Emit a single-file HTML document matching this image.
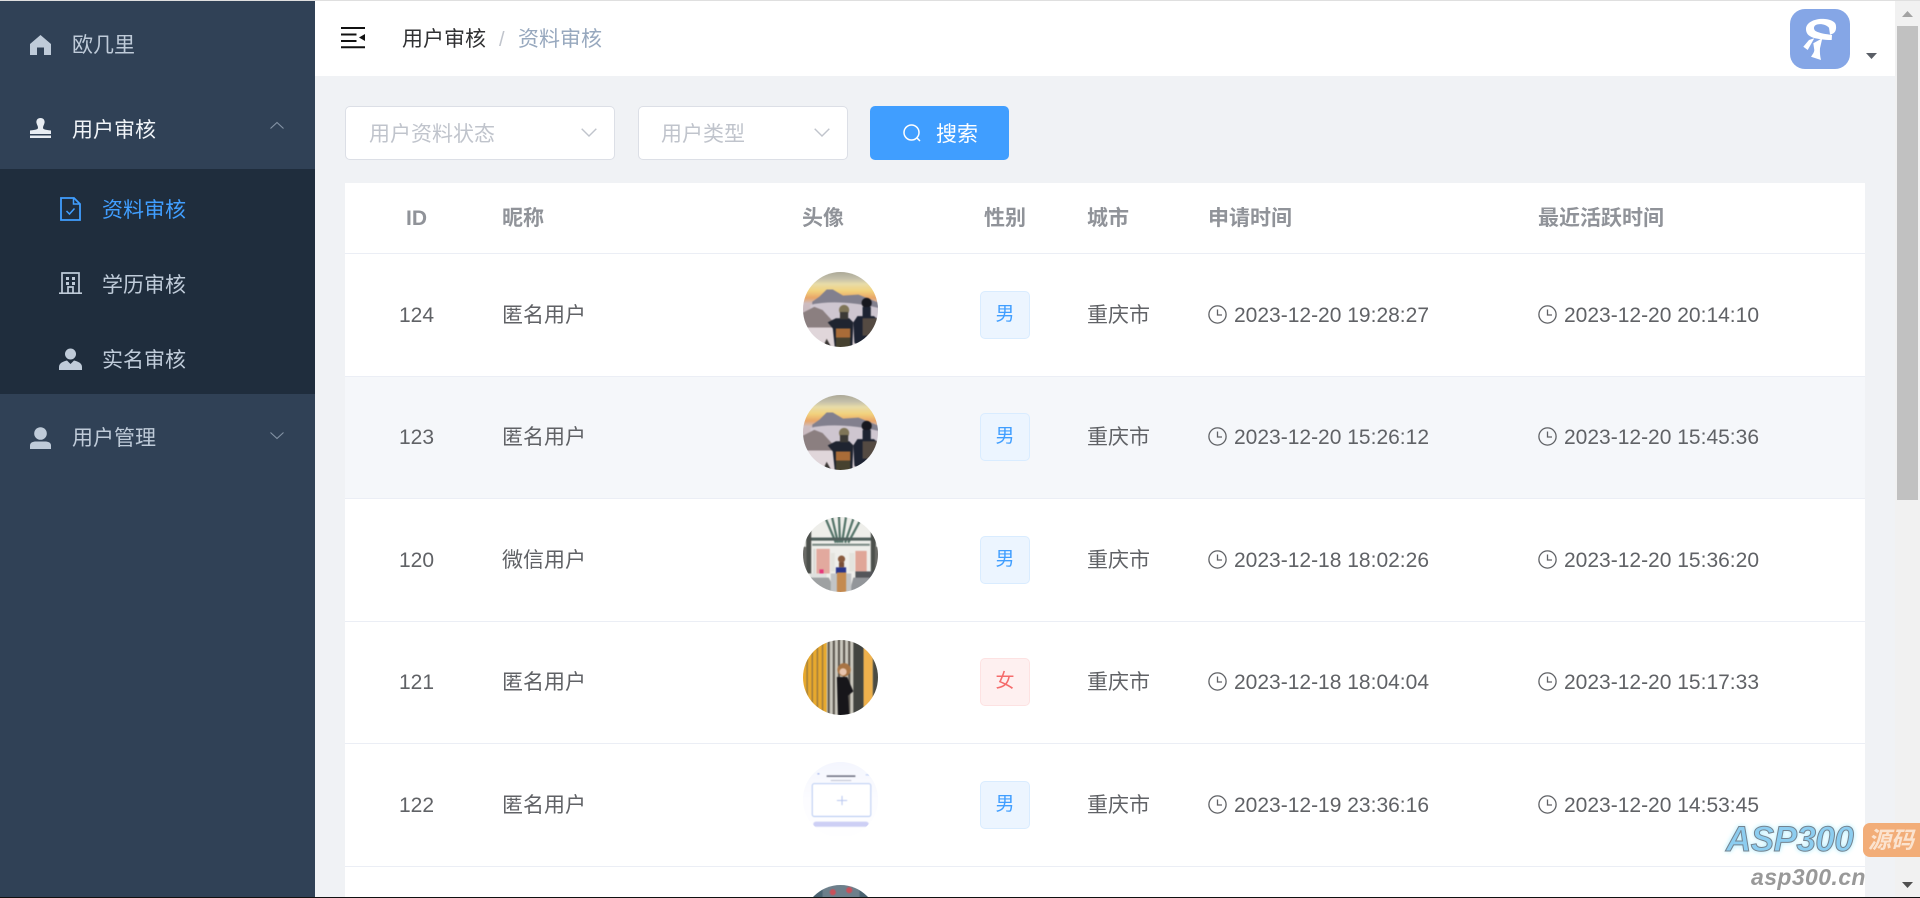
<!DOCTYPE html>
<html lang="zh-CN"><head><meta charset="utf-8"><title>资料审核</title>
<style>
html,body{margin:0;padding:0;width:1920px;height:898px;overflow:hidden;background:#f0f2f5}
body{position:relative;font-family:"Liberation Sans","Noto Sans CJK SC",sans-serif;font-size:21px;color:#606266}
.a{position:absolute}
.t{position:absolute;height:30px;line-height:30px;white-space:nowrap;margin-top:2px}
.m{color:#bfcbd9}
.h{color:#909399;font-weight:700;font-size:21px}
.line{position:absolute;left:345px;width:1520px;height:1px;background:#ebeef5}
.tag{position:absolute;left:980px;width:48px;height:46px;border:1px solid #d9ecff;background:#ecf5ff;color:#409eff;border-radius:5px;text-align:center;line-height:45px;font-size:19px}
.tag.f{border-color:#fde2e2;background:#fef0f0;color:#f56c6c}
.av{position:absolute;left:803px;width:75px;height:75px;border-radius:50%;overflow:hidden}
.av svg{display:block;position:absolute;left:-1px;top:-1px;filter:blur(.6px)}
svg.i{position:absolute;overflow:visible}
</style></head>
<body>
<svg width="0" height="0" style="position:absolute">
<defs>
<linearGradient id="sky" x1="0" y1="0" x2="0" y2="1"><stop offset="0" stop-color="#a9a696"/><stop offset=".1" stop-color="#c4c0aa"/><stop offset=".17" stop-color="#e8dca8"/><stop offset=".26" stop-color="#f2d27c"/><stop offset=".35" stop-color="#e9a568"/><stop offset=".42" stop-color="#cdbcc0"/><stop offset=".72" stop-color="#c2b8c2"/><stop offset="1" stop-color="#e2d8dc"/></linearGradient>
<linearGradient id="fg" x1="0" y1="0" x2="0" y2="1"><stop offset="0" stop-color="#f4f6fe"/><stop offset=".5" stop-color="#fcfcff"/><stop offset="1" stop-color="#fff"/></linearGradient>
<symbol id="clock" viewBox="0 0 19 19"><circle cx="9.5" cy="9.5" r="8.6" fill="none" stroke="#606266" stroke-width="1.3"/><path d="M9.5 4.5V10H14" fill="none" stroke="#606266" stroke-width="1.3"/></symbol>
<symbol id="mount" viewBox="0 0 75 75">
<rect width="75" height="75" fill="url(#sky)"/>
<path d="M10 30L17 25 24 18 30 18 40 24 55 23 75 31V38L40 36 10 34Z" fill="#82808e"/>
<path d="M8 33Q35 27 75 36V46L40 50 8 42Z" fill="#cec6d0"/>
<path d="M0 41L12 35 20 38 31 50 33 57H0Z" fill="#8b7f80"/>
<path d="M0 55H32V75H0Z" fill="#e0d6da"/>
<path d="M25 50L33 46H46L50 50 49 75H32L30 56Z" fill="#1f2430"/>
<circle cx="41" cy="38" r="5" fill="#7f7558"/><rect x="37" y="40" width="8" height="7" fill="#3c3a36"/>
<rect x="33" y="56" width="14" height="9" fill="#a96c38"/><rect x="33" y="65" width="14" height="10" fill="#46412f"/>
<path d="M50 50L54 44H70L75 48V60L56 73 51 70Z" fill="#1d2332"/>
<circle cx="63" cy="31" r="5" fill="#17181f"/><rect x="59" y="35" width="8" height="10" fill="#1d2332"/>
<rect x="59" y="46" width="15" height="17" fill="#544a42"/>
<path d="M20 75L24 66 29 75Z" fill="#3a3634"/>
</symbol>
<symbol id="street" viewBox="0 0 75 75">
<rect width="75" height="75" fill="#eeeeea"/>
<path d="M22 0L33 26M29 0L35 26M36 0L37 26M43 0L39 26M51 0L42 26M59 0L45 26" stroke="#55756a" stroke-width="2.200" fill="none"/>
<rect x="8" y="21" width="60" height="3" fill="#4f5f5c"/><rect x="10" y="27" width="56" height="2" fill="#7b8a85"/>
<rect x="4" y="14" width="5" height="42" fill="#4c504c"/><rect x="67" y="14" width="5" height="42" fill="#4c504c"/>
<rect x="0" y="30" width="4" height="24" fill="#6a6a66"/><rect x="71" y="30" width="4" height="24" fill="#6a6a66"/>
<rect x="14" y="32" width="13" height="24" fill="#e2a99e"/><rect x="52" y="34" width="11" height="20" fill="#e0a698"/>
<rect x="11" y="32" width="2" height="24" fill="#d8d8d4"/><rect x="28" y="36" width="4" height="18" fill="#e4e4de"/><rect x="46" y="36" width="5" height="18" fill="#e4e4de"/>
<rect x="17" y="52" width="4" height="5" fill="#e5377b"/><rect x="8" y="56" width="16" height="6" fill="#dfe0de"/><rect x="52" y="54" width="20" height="7" fill="#54565a"/>
<path d="M0 60H26L34 75H0Z" fill="#9ea1a2"/><path d="M46 75L50 60H75V75Z" fill="#93969a"/><rect x="28" y="56" width="20" height="19" fill="#c2c4c6"/>
<rect x="33" y="50" width="10" height="6" fill="#28348a"/>
<rect x="34" y="55" width="9" height="20" fill="#c48a50"/><circle cx="38.500" cy="42" r="3.500" fill="#8a5b3e"/><rect x="36" y="45" width="5" height="5" fill="#7a4f38"/>
</symbol>
<symbol id="wall" viewBox="0 0 75 75">
<rect width="75" height="75" fill="#cbc8be"/>
<path d="M0 0H24V75H0Z" fill="#e8a92e"/>
<path d="M5 0V75M10 0V75M15 0V75M20 0V75" stroke="#9b7a3e" stroke-width="1.400"/>
<path d="M26 0V75M31 0V75M36 0V75M41 0V75M46 0V75" stroke="#5c574f" stroke-width="2"/>
<path d="M50 0H60V75H50Z" fill="#424440"/><path d="M60 0H69V75H60Z" fill="#efb14c"/><path d="M69 0H75V75H69Z" fill="#4a4b44"/>
<path d="M34 37L44 37 50 51 45 55 46 75H35Z" fill="#17161a"/>
<circle cx="41" cy="30" r="6.500" fill="#a87444"/><circle cx="40" cy="32" r="3.500" fill="#e8c5ae"/>
</symbol>
<symbol id="form" viewBox="0 0 75 75">
<rect width="75" height="75" fill="url(#fg)"/>
<rect x="24" y="14" width="28" height="1.500" fill="#6b6e80"/><rect x="28" y="18.500" width="20" height="1" fill="#c0c3d2"/>
<rect x="15" y="12" width="2" height="1" fill="#8aa0e6"/><rect x="62" y="13" width="4" height="1" fill="#b9cbf2"/>
<rect x="10" y="22" width="57" height="32" rx="2" fill="#fff" stroke="#b9cbf2" stroke-width="1"/>
<path d="M34 38.500H44M39 34V43" stroke="#b8c7f0" stroke-width="1"/>
<rect x="11" y="59" width="54" height="5" rx="2.500" fill="#cdcff5"/>
</symbol>
<symbol id="shop" viewBox="0 0 75 75">
<rect width="75" height="75" fill="#4c6472"/><path d="M20 0H56V14H20Z" fill="#6d7f8b"/><circle cx="30" cy="8" r="3" fill="#c9505a"/><circle cx="46" cy="6" r="3" fill="#c9505a"/>
</symbol>
</defs>
</svg>

<!-- top hairline -->
<div class="a" style="left:0;top:0;width:1920px;height:1px;background:#dfdfdf;z-index:5"></div>

<!-- sidebar -->
<div class="a" style="left:0;top:1px;width:315px;height:897px;background:#304156"></div>
<div class="a" style="left:0;top:169px;width:315px;height:225px;background:#1f2d3d"></div>

<svg class="i" style="left:30px;top:35px" width="21" height="20" viewBox="0 0 21 20"><path d="M10.500 0L21 9V20H14V12.500H7V20H0V9Z" fill="#bfcbd9"/></svg>
<div class="t m" style="left:72px;top:29px">欧几里</div>

<svg class="i" style="left:30px;top:118px" width="21" height="20" viewBox="0 0 21 20"><path d="M10.500 0C14 0 15 3 14.500 5C14 7 13 8 13 10C13 11 15 12 21 12.500V16H0V12.500C6 12 8 11 8 10C8 8 7 7 6.500 5C6 3 7 0 10.500 0Z" fill="#e8edf3"/><rect y="17.500" width="21" height="2.500" fill="#e8edf3"/></svg>
<div class="t" style="left:72px;top:114px;color:#f0f4f8">用户审核</div>
<svg class="i" style="left:270px;top:122px" width="14" height="7" viewBox="0 0 14 7"><path d="M.5 6.500L7 .5 13.500 6.500" fill="none" stroke="#8493a5" stroke-width="1.100"/></svg>

<svg class="i" style="left:60px;top:197px" width="21" height="24" viewBox="0 0 21 24"><path d="M1 1H14L20 7V23H1Z" fill="none" stroke="#409eff" stroke-width="1.800"/><path d="M13.500 1V7H20" fill="none" stroke="#409eff" stroke-width="1.500"/><path d="M6.500 14L9.500 17 14.500 11.500" fill="none" stroke="#409eff" stroke-width="1.500"/></svg>
<div class="t" style="left:102px;top:194px;color:#409eff">资料审核</div>

<svg class="i" style="left:59px;top:272px" width="23" height="22" viewBox="0 0 23 22"><path d="M3 21V1H20V21M0 21.200H23M9 21V15H14V21" fill="none" stroke="#bfcbd9" stroke-width="1.700"/><path d="M7 5h3v3H7zM13 5h3v3h-3zM7 10h3v3H7zM13 10h3v3h-3z" fill="#bfcbd9"/></svg>
<div class="t m" style="left:102px;top:269px">学历审核</div>

<svg class="i" style="left:59px;top:348px" width="23" height="22" viewBox="0 0 23 22"><circle cx="11.500" cy="6" r="5.500" fill="#bfcbd9"/><path d="M0 22V19C0 15 4 13.500 8 12.500L11.500 16 15 12.500C19 13.500 23 15 23 19V22Z" fill="#bfcbd9"/></svg>
<div class="t m" style="left:102px;top:344px">实名审核</div>

<svg class="i" style="left:30px;top:427px" width="21" height="22" viewBox="0 0 21 22"><circle cx="10.500" cy="6.500" r="6.300" fill="#bfcbd9"/><path d="M0 22V18.500C0 15.500 3 14.500 6 14.500H15C18 14.500 21 15.500 21 18.500V22Z" fill="#bfcbd9"/></svg>
<div class="t m" style="left:72px;top:422px">用户管理</div>
<svg class="i" style="left:270px;top:432px" width="14" height="7" viewBox="0 0 14 7"><path d="M.5 .5L7 6.500 13.500 .5" fill="none" stroke="#8493a5" stroke-width="1.100"/></svg>

<!-- header -->
<div class="a" style="left:315px;top:1px;width:1580px;height:75px;background:#fff"></div>
<svg class="i" style="left:341px;top:27px" width="24" height="21" viewBox="0 0 24 21"><path d="M0 1H24M0 7.500H15.500M0 14H15.500M0 20.300H24" stroke="#111" stroke-width="2" fill="none"/><path d="M24 7V14L18 10.500Z" fill="#111"/></svg>
<div class="t" style="left:402px;top:23px;color:#303133">用户审核</div>
<div class="t" style="left:499px;top:23px;color:#c0c4cc;font-size:20px">/</div>
<div class="t" style="left:518px;top:23px;color:#97a8be">资料审核</div>

<svg class="i" style="left:1790px;top:9px" width="60" height="60" viewBox="0 0 60 60"><rect width="60" height="60" rx="15" fill="#85a6e6"/>
<path d="M16 20C16 13 26 9 35 10C41 10.500 46 13 46 17C46.500 21 45 25 40 25.500L39 18.700C36 15.500 31 14.500 27 15.500C23.500 16.500 23 20 25.500 22C30 24.500 36 25 42 26L41.700 31C34 31 28 30 23.300 28.700C18 27 16 24 16 20Z" fill="#fff"/>
<path d="M23.300 34.300L32.300 29.300L30 39.300C29.700 43 30 47 31 51L21 47.700C23 45 24.300 43 24.300 41Z" fill="#fff"/>
<path d="M13.300 37.700L19 31 24.300 29.300 17.700 41Z" fill="#fff"/></svg>
<svg class="i" style="left:1866px;top:53px" width="11" height="6" viewBox="0 0 11 6"><path d="M0 0H11L5.500 6Z" fill="#5a5e66"/></svg>

<!-- filters -->
<div class="a" style="left:345px;top:106px;width:268px;height:52px;background:#fff;border:1px solid #dcdfe6;border-radius:5px"></div>
<div class="t" style="left:369px;top:118px;color:#c0c4cc">用户资料状态</div>
<svg class="i" style="left:581px;top:128px" width="16" height="9" viewBox="0 0 16 9"><path d="M.7 .7L8 8 15.300 .7" fill="none" stroke="#c0c4cc" stroke-width="1.400"/></svg>

<div class="a" style="left:638px;top:106px;width:208px;height:52px;background:#fff;border:1px solid #dcdfe6;border-radius:5px"></div>
<div class="t" style="left:661px;top:118px;color:#c0c4cc">用户类型</div>
<svg class="i" style="left:814px;top:128px" width="16" height="9" viewBox="0 0 16 9"><path d="M.7 .7L8 8 15.300 .7" fill="none" stroke="#c0c4cc" stroke-width="1.400"/></svg>

<div class="a" style="left:870px;top:106px;width:139px;height:54px;background:#409eff;border-radius:5px"></div>
<svg class="i" style="left:903px;top:124px" width="18" height="18" viewBox="0 0 18 18"><circle cx="8.500" cy="8.500" r="7.500" fill="none" stroke="#fff" stroke-width="1.500"/><path d="M13.800 13.800L17 17" stroke="#fff" stroke-width="1.500"/></svg>
<div class="t" style="left:936px;top:118px;color:#fff">搜索</div>

<!-- table -->
<div class="a" style="left:345px;top:183px;width:1520px;height:715px;background:#fff"></div>
<div class="a" style="left:345px;top:376px;width:1520px;height:122px;background:#f5f7fa"></div>
<div class="line" style="top:253px"></div>
<div class="line" style="top:376px"></div>
<div class="line" style="top:498px"></div>
<div class="line" style="top:621px"></div>
<div class="line" style="top:743px"></div>
<div class="line" style="top:866px"></div>

<div class="t h" style="left:406px;top:202px">ID</div>
<div class="t h" style="left:502px;top:202px">昵称</div>
<div class="t h" style="left:802px;top:202px">头像</div>
<div class="t h" style="left:984px;top:202px">性别</div>
<div class="t h" style="left:1087px;top:202px">城市</div>
<div class="t h" style="left:1208px;top:202px">申请时间</div>
<div class="t h" style="left:1538px;top:202px">最近活跃时间</div>

<!-- row 1 -->
<div class="t" style="left:399px;top:299px">124</div>
<div class="t" style="left:502px;top:299px">匿名用户</div>
<div class="av" style="top:272px"><svg width="77" height="77"><use href="#mount"/></svg></div>
<div class="tag" style="top:291px">男</div>
<div class="t" style="left:1087px;top:299px">重庆市</div>
<svg class="i" style="left:1208px;top:305px" width="19" height="19"><use href="#clock"/></svg>
<div class="t" style="left:1234px;top:299px">2023-12-20 19:28:27</div>
<svg class="i" style="left:1538px;top:305px" width="19" height="19"><use href="#clock"/></svg>
<div class="t" style="left:1564px;top:299px">2023-12-20 20:14:10</div>

<!-- row 2 -->
<div class="t" style="left:399px;top:421px">123</div>
<div class="t" style="left:502px;top:421px">匿名用户</div>
<div class="av" style="top:395px"><svg width="77" height="77"><use href="#mount"/></svg></div>
<div class="tag" style="top:413px">男</div>
<div class="t" style="left:1087px;top:421px">重庆市</div>
<svg class="i" style="left:1208px;top:427px" width="19" height="19"><use href="#clock"/></svg>
<div class="t" style="left:1234px;top:421px">2023-12-20 15:26:12</div>
<svg class="i" style="left:1538px;top:427px" width="19" height="19"><use href="#clock"/></svg>
<div class="t" style="left:1564px;top:421px">2023-12-20 15:45:36</div>

<!-- row 3 -->
<div class="t" style="left:399px;top:544px">120</div>
<div class="t" style="left:502px;top:544px">微信用户</div>
<div class="av" style="top:517px"><svg width="77" height="77"><use href="#street"/></svg></div>
<div class="tag" style="top:536px">男</div>
<div class="t" style="left:1087px;top:544px">重庆市</div>
<svg class="i" style="left:1208px;top:550px" width="19" height="19"><use href="#clock"/></svg>
<div class="t" style="left:1234px;top:544px">2023-12-18 18:02:26</div>
<svg class="i" style="left:1538px;top:550px" width="19" height="19"><use href="#clock"/></svg>
<div class="t" style="left:1564px;top:544px">2023-12-20 15:36:20</div>

<!-- row 4 -->
<div class="t" style="left:399px;top:666px">121</div>
<div class="t" style="left:502px;top:666px">匿名用户</div>
<div class="av" style="top:640px"><svg width="77" height="77"><use href="#wall"/></svg></div>
<div class="tag f" style="top:658px">女</div>
<div class="t" style="left:1087px;top:666px">重庆市</div>
<svg class="i" style="left:1208px;top:672px" width="19" height="19"><use href="#clock"/></svg>
<div class="t" style="left:1234px;top:666px">2023-12-18 18:04:04</div>
<svg class="i" style="left:1538px;top:672px" width="19" height="19"><use href="#clock"/></svg>
<div class="t" style="left:1564px;top:666px">2023-12-20 15:17:33</div>

<!-- row 5 -->
<div class="t" style="left:399px;top:789px">122</div>
<div class="t" style="left:502px;top:789px">匿名用户</div>
<div class="av" style="top:762px"><svg width="77" height="77"><use href="#form"/></svg></div>
<div class="tag" style="top:781px">男</div>
<div class="t" style="left:1087px;top:789px">重庆市</div>
<svg class="i" style="left:1208px;top:795px" width="19" height="19"><use href="#clock"/></svg>
<div class="t" style="left:1234px;top:789px">2023-12-19 23:36:16</div>
<svg class="i" style="left:1538px;top:795px" width="19" height="19"><use href="#clock"/></svg>
<div class="t" style="left:1564px;top:789px">2023-12-20 14:53:45</div>

<!-- row 6 partial, clipped to the viewport -->
<div class="a" style="left:803px;top:885px;width:75px;height:13px;overflow:hidden"><div class="av" style="left:0;top:0"><svg width="77" height="77"><use href="#shop"/></svg></div></div>

<!-- scrollbar -->
<div class="a" style="left:1895px;top:1px;width:25px;height:897px;background:#f1f1f1"></div>
<div class="a" style="left:1897px;top:26px;width:21px;height:474px;background:#c1c1c1"></div>
<svg class="i" style="left:1902px;top:11px" width="11" height="6" viewBox="0 0 11 6"><path d="M5.500 0L11 6H0Z" fill="#a3a3a3"/></svg>
<svg class="i" style="left:1902px;top:882px" width="11" height="6" viewBox="0 0 11 6"><path d="M0 0H11L5.500 6Z" fill="#505050"/></svg>

<!-- watermark -->
<div class="a" style="left:1726px;top:820px;height:40px;line-height:40px;font-size:35px;font-weight:700;font-style:italic;color:#8ccdf0;letter-spacing:-.5px;-webkit-text-stroke:1px #75838f;text-shadow:0 0 4px #bff0ff,0 0 6px #bff0ff;white-space:nowrap">ASP300</div>
<div class="a" style="left:1863px;top:823px;width:57px;height:34px;background:#f2ad78;border-radius:7px 0 0 7px"></div>
<div class="a" style="left:1868px;top:823px;height:34px;line-height:34px;font-size:23px;font-weight:700;font-style:italic;color:#fbe3cf;white-space:nowrap">源码</div>
<div class="a" style="left:1751px;top:862px;height:30px;line-height:30px;font-size:23px;font-weight:700;font-style:italic;color:#999;letter-spacing:.4px;white-space:nowrap">asp300.cn</div>

<!-- bottom edge -->
<div class="a" style="left:0;top:897px;width:1920px;height:1px;background:#111;z-index:5"></div>
</body></html>
